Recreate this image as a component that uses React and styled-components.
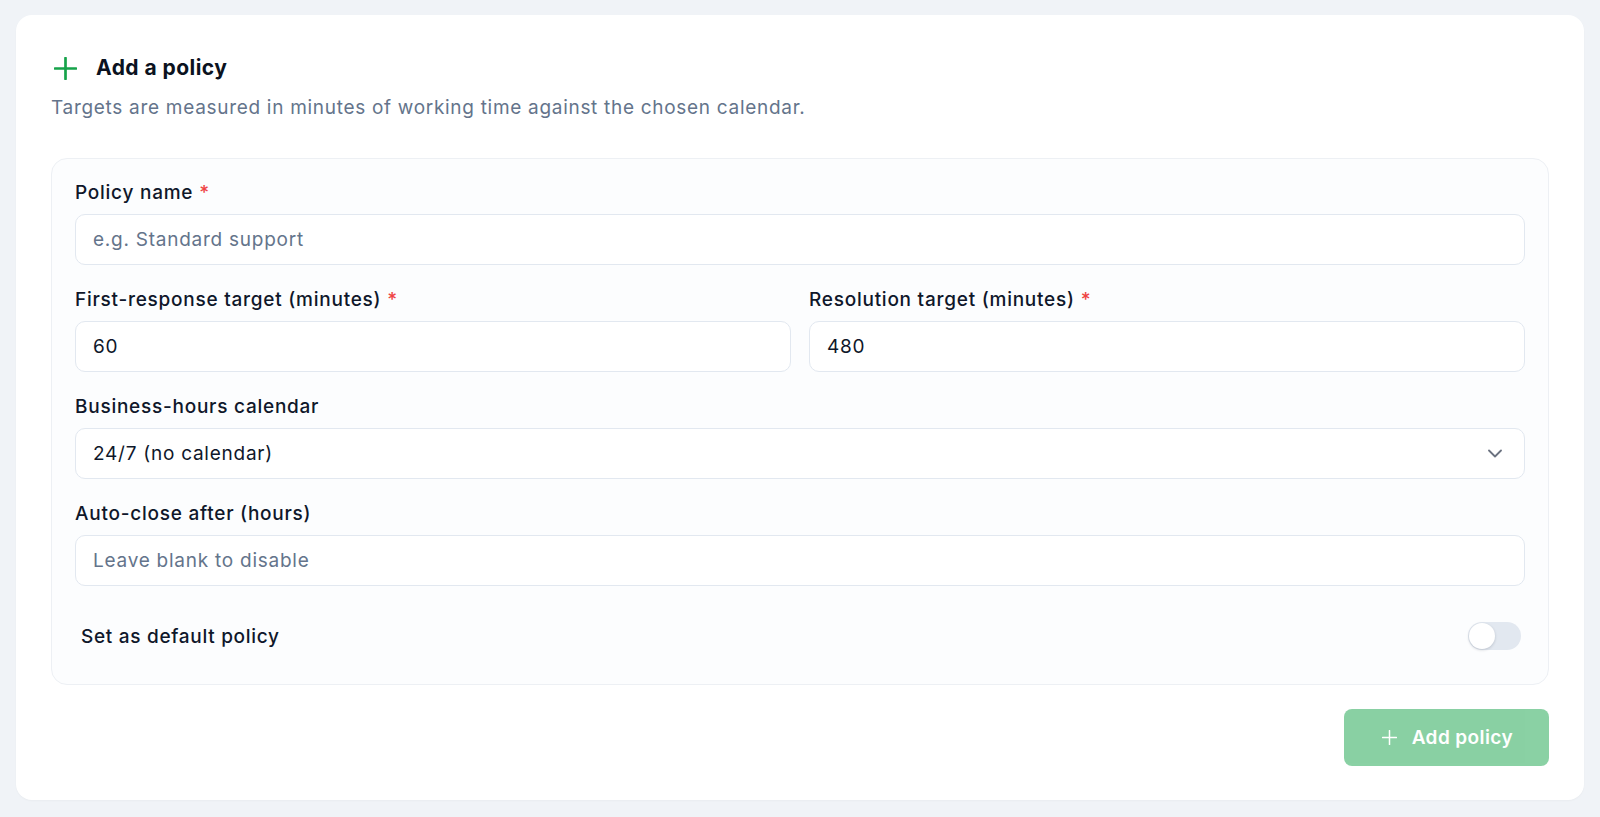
import React, { useState } from "react";
import styled, { createGlobalStyle } from "styled-components";

const Global = createGlobalStyle`
  * { box-sizing: border-box; }
  html, body { margin: 0; padding: 0; background: #f0f3f7; }
  body { font-family: Inter, "Noto Sans", sans-serif; color: #0f172a; }
`;

const Page = styled.div`
  padding: 15px 16px 17px;
`;

const Card = styled.section`
  background: #ffffff;
  border-radius: 16px;
  padding: 39px 35px 34px;
  box-shadow: 0 1px 2px rgba(15, 23, 42, 0.03);
`;

const TitleRow = styled.div`
  display: flex;
  align-items: center;
  gap: 19px;
  height: 28px;
  padding-left: 3px;
`;

const Title = styled.h2`
  margin: 0;
  font-size: 21px;
  line-height: 28px;
  font-weight: 700;
  letter-spacing: 0.45px;
  color: #0b1220;
`;

const Subtitle = styled.p`
  margin: 12px 0 0;
  font-size: 19px;
  letter-spacing: 0.7px;
  line-height: 28px;
  color: #64748b;
`;

const Panel = styled.div`
  margin-top: 36px;
  background: #fcfdfe;
  border: 1px solid #edf0f4;
  border-radius: 16px;
  padding: 21px 23px 20px;
  display: flex;
  flex-direction: column;
  gap: 22px;
`;

const Row = styled.div`
  display: grid;
  grid-template-columns: 1fr 1fr;
  gap: 18px;
`;

const Field = styled.div`
  display: flex;
  flex-direction: column;
  gap: 8px;
`;

const Label = styled.label`
  font-size: 19px;
  letter-spacing: 0.75px;
  line-height: 26px;
  font-weight: 500;
  color: #0f172a;
`;

const Req = styled.span`
  color: #ef4444;
  margin-left: 6px;
`;

const Input = styled.input`
  height: 51px;
  width: 100%;
  border: 1px solid #e2e8f0;
  border-radius: 10px;
  background: #ffffff;
  padding: 0 17px;
  font-family: inherit;
  font-size: 19px;
  letter-spacing: 0.75px;
  color: #0f172a;
  outline: none;
  &::placeholder { color: #64748b; }
`;

const SelectBox = styled.div`
  position: relative;
  height: 51px;
  border: 1px solid #e2e8f0;
  border-radius: 10px;
  background: #ffffff;
  display: flex;
  align-items: center;
  justify-content: space-between;
  padding: 0 22px 0 17px;
  font-size: 19px;
  letter-spacing: 0.75px;
  color: #0f172a;
`;

const ToggleRow = styled.div`
  height: 56px;
  display: flex;
  align-items: center;
  justify-content: space-between;
  padding: 0 4px 0 6px;
`;

const ToggleText = styled.span`
  font-size: 19px;
  letter-spacing: 0.7px;
  font-weight: 500;
  color: #0f172a;
`;

const Track = styled.button`
  position: relative;
  width: 53px;
  height: 28px;
  border-radius: 14px;
  border: none;
  padding: 0;
  background: ${(p) => (p.$on ? "#16a34a" : "#e2e8f0")};
  cursor: pointer;
`;

const Knob = styled.span`
  position: absolute;
  top: 1px;
  left: ${(p) => (p.$on ? "26px" : "1px")};
  width: 26px;
  height: 26px;
  border-radius: 50%;
  background: #ffffff;
  box-shadow: 0 1px 3px rgba(15, 23, 42, 0.18);
`;

const Footer = styled.div`
  margin-top: 24px;
  display: flex;
  justify-content: flex-end;
`;

const Button = styled.button`
  height: 57px;
  padding: 0 36px 0 38px;
  border: none;
  border-radius: 8px;
  background: #16a34a;
  opacity: 0.5;
  color: #ffffff;
  font-family: inherit;
  font-size: 19px;
  letter-spacing: 0.4px;
  font-weight: 600;
  display: flex;
  align-items: center;
  gap: 15px;
`;

const PlusIcon = ({ size = 24, color = "#16a34a", stroke = 2.6 }) => (
  <svg width={size} height={size} viewBox="0 0 24 24" fill="none">
    <path d="M12 1v22M1 12h22" stroke={color} strokeWidth={stroke} strokeLinecap="round" />
  </svg>
);

const Chevron = () => (
  <svg width="14" height="9" viewBox="0 0 14 9" fill="none">
    <path d="M1 1.5l6 6 6-6" stroke="#6b7280" strokeWidth="1.8" strokeLinecap="round" strokeLinejoin="round" />
  </svg>
);

export default function App() {
  const [on, setOn] = useState(false);
  return (
    <Page>
      <Global />
      <Card>
        <TitleRow>
          <PlusIcon size={23} stroke={2.8} />
          <Title>Add a policy</Title>
        </TitleRow>
        <Subtitle>Targets are measured in minutes of working time against the chosen calendar.</Subtitle>
        <Panel>
          <Field>
            <Label>Policy name<Req>*</Req></Label>
            <Input placeholder="e.g. Standard support" />
          </Field>
          <Row>
            <Field>
              <Label>First-response target (minutes)<Req>*</Req></Label>
              <Input defaultValue="60" />
            </Field>
            <Field>
              <Label>Resolution target (minutes)<Req>*</Req></Label>
              <Input defaultValue="480" />
            </Field>
          </Row>
          <Field>
            <Label>Business-hours calendar</Label>
            <SelectBox>
              <span>24/7 (no calendar)</span>
              <Chevron />
            </SelectBox>
          </Field>
          <Field>
            <Label>Auto-close after (hours)</Label>
            <Input placeholder="Leave blank to disable" />
          </Field>
          <ToggleRow>
            <ToggleText>Set as default policy</ToggleText>
            <Track $on={on} onClick={() => setOn(!on)} aria-label="Set as default policy">
              <Knob $on={on} />
            </Track>
          </ToggleRow>
        </Panel>
        <Footer>
          <Button>
            <PlusIcon size={15} color="#ffffff" stroke={2.4} />
            Add policy
          </Button>
        </Footer>
      </Card>
    </Page>
  );
}
